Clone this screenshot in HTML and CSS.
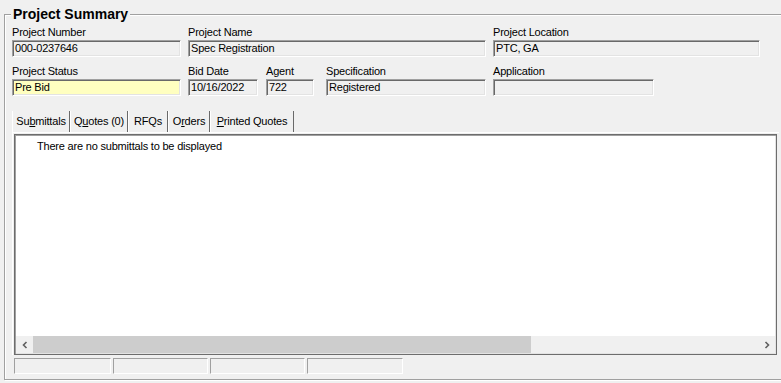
FILE: index.html
```html
<!DOCTYPE html>
<html lang="en">
<head>
    <meta charset="UTF-8">
    <title>Project Summary</title>
    <link rel="stylesheet" href="styles.css">
</head>
<body>
    <fieldset class="summary">
        <legend>Project Summary</legend>
        <div class="row">
            <div class="field w-num">
                <label>Project Number</label>
                <div class="box">000-0237646</div>
            </div>
            <div class="field w-name">
                <label>Project Name</label>
                <div class="box">Spec Registration</div>
            </div>
            <div class="field w-loc">
                <label>Project Location</label>
                <div class="box">PTC, GA</div>
            </div>
        </div>
        <div class="row row2">
            <div class="field w-num">
                <label>Project Status</label>
                <div class="box yellow">Pre Bid</div>
            </div>
            <div class="field w-bid">
                <label>Bid Date</label>
                <div class="box">10/16/2022</div>
            </div>
            <div class="field w-agent">
                <label>Agent</label>
                <div class="box">722</div>
            </div>
            <div class="field w-spec">
                <label>Specification</label>
                <div class="box">Registered</div>
            </div>
            <div class="field w-app">
                <label>Application</label>
                <div class="box"></div>
            </div>
        </div>

        <div class="tabs">
            <span class="tab t-sub active">Su<u>b</u>mittals</span>
            <span class="tab t-quo">Q<u>u</u>otes (0)</span>
            <span class="tab t-rfq">RFQs</span>
            <span class="tab t-ord">O<u>r</u>ders</span>
            <span class="tab t-pri"><u>P</u>rinted Quotes</span>
        </div>
        <div class="panel">
            <div class="list">
                <div class="list-body">There are no submittals to be displayed</div>
                <div class="hscroll">
                    <div class="arrow">
                        <svg width="8" height="8" viewBox="0 0 8 8"><path d="M5.5 1 L2.5 4 L5.5 7" fill="none" stroke="#606060" stroke-width="1.6"/></svg>
                    </div>
                    <div class="thumb"></div>
                    <div class="track"></div>
                    <div class="arrow">
                        <svg width="8" height="8" viewBox="0 0 8 8"><path d="M2.5 1 L5.5 4 L2.5 7" fill="none" stroke="#606060" stroke-width="1.6"/></svg>
                    </div>
                </div>
            </div>
        </div>
        <div class="status">
            <div class="cell c1"></div>
            <div class="cell c2"></div>
            <div class="cell c2"></div>
            <div class="cell c3"></div>
        </div>
    </fieldset>
</body>
</html>
```

FILE: styles.css
```css
html,body{
    margin: 0;
    padding: 0;
}
body{
    background: #f0f0f0;
    font-family: "Liberation Sans", Arial, sans-serif;
    font-size: 11px;
    letter-spacing: -0.2px;
    color: #000;
    width: 781px;
    height: 383px;
    overflow: hidden;
}
.summary{
    margin: 7px 0 0 4px;
    padding: 4px 0 5px 7px;
    width: 800px;
    border: 1px solid #a0a0a0;
    box-shadow: inset 1px 1px 0 #fff, 1px 1px 0 #fff;
    min-width: 0;
}
.summary legend{
    font-size: 14px;
    font-weight: bold;
    letter-spacing: 0;
    line-height: 15px;
    padding: 0 2px;
    margin-left: -1px;
    background: #f0f0f0;
}
.row{
    display: flex;
}
.row2{
    margin-top: 8px;
}
.field{
    display: flex;
    flex-direction: column;
    margin-right: 7px;
}
.field label{
    line-height: 13px;
    height: 14px;
}
.box{
    box-sizing: border-box;
    height: 17px;
    line-height: 13px;
    padding: 1px 0 0 2px;
    border-top: 1px solid #a0a0a0;
    border-left: 1px solid #a0a0a0;
    border-right: 1px solid #fff;
    border-bottom: 1px solid #fff;
    box-shadow: inset 1px 1px 0 #696969, inset -1px -1px 0 #e3e3e3;
    white-space: nowrap;
    overflow: hidden;
}
.yellow{
    background: #ffffc0;
}
.w-num{ width: 169px; }
.w-name{ width: 298px; }
.w-loc{ width: 267px; }
.w-bid{ width: 70px; margin-right: 8px; }
.w-agent{ width: 48px; margin-right: 12px; }
.w-spec{ width: 160px; }
.w-app{ width: 161px; }

.tabs{
    display: flex;
    margin-top: 15px;
    height: 21px;
}
.tab{
    box-sizing: border-box;
    height: 21px;
    line-height: 18px;
    padding-top: 1px;
    text-align: center;
    border-left: 1px solid #fff;
    border-right: 1px solid #696969;
    white-space: nowrap;
}
.t-sub{ width: 58px; }
.t-quo{ width: 58px; }
.t-rfq{ width: 40px; }
.t-ord{ width: 42px; }
.t-pri{ width: 84px; }
.panel{
    width: 765px;
    border-left: 1px solid #fff;
    border-top: 1px solid #fff;
    padding: 1px 0 0 1px;
}
.list{
    box-sizing: border-box;
    width: 763px;
    height: 221px;
    background: #fff;
    border: 1px solid #6d6d6d;
    box-shadow: inset 1px 1px 0 #a0a0a0, inset -1px -1px 0 #e3e3e3;
    padding: 1px;
    display: flex;
    flex-direction: column;
}
.list-body{
    flex: 1;
    padding: 3px 0 0 21px;
    line-height: 14px;
}
.hscroll{
    display: flex;
    height: 17px;
    background: #f0f0f0;
}
.arrow{
    width: 17px;
    display: flex;
    align-items: center;
    justify-content: center;
}
.thumb{
    width: 498px;
    background: #cdcdcd;
}
.track{
    flex: 1;
}
.status{
    display: flex;
    gap: 2px;
    margin-top: 3px;
    margin-left: 2px;
}
.cell{
    box-sizing: border-box;
    height: 16px;
    border-top: 1px solid #a0a0a0;
    border-left: 1px solid #a0a0a0;
    border-right: 1px solid #fff;
    border-bottom: 1px solid #fff;
}
.c1{ width: 97px; }
.c2{ width: 95px; }
.c3{ width: 96px; }
```
